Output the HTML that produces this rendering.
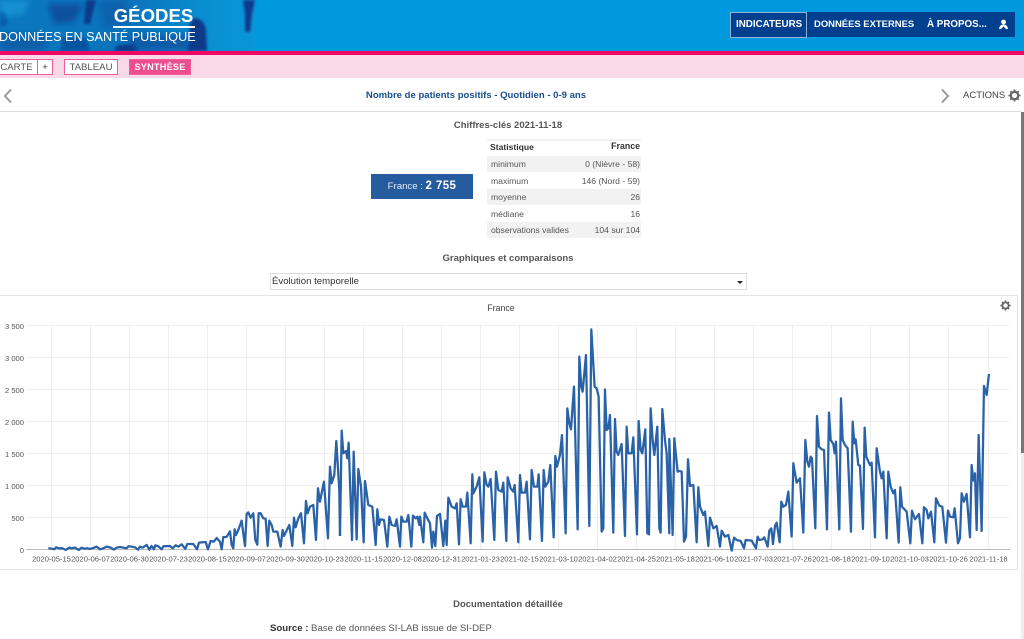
<!DOCTYPE html>
<html lang="fr"><head><meta charset="utf-8"><title>Géodes</title>
<style>
html,body{margin:0;padding:0;width:1024px;height:639px;overflow:hidden;background:#fff;font-family:"Liberation Sans",sans-serif;color:#444}
.a{position:absolute;white-space:nowrap}
.btn{box-sizing:border-box;background:#fff;border:1px solid #ee5e98;height:16px;line-height:15px;font-size:9.6px;color:#555;text-align:center}
.h{font-size:9.5px;font-weight:bold;color:#555;text-align:center}
.r{left:487px;width:154px;height:16.4px;line-height:16.4px;font-size:8.6px;color:#555}
.r span{position:absolute;right:1px}
.r b{font-weight:normal;margin-left:4px}
.g{background:#f2f2f2}
.nv{color:#fff;font-size:9.8px;font-weight:bold;top:12px;height:25px;line-height:25px}
</style></head><body>

<svg class="a" style="left:0;top:0" width="1024" height="51">
<defs>
<linearGradient id="bg" x1="0" x2="1"><stop offset="0" stop-color="#0a78c0"/><stop offset=".5" stop-color="#0a72ba"/><stop offset=".8" stop-color="#0a8ed2"/><stop offset="1" stop-color="#0a96da"/></linearGradient>
<filter id="bl" x="-20%" y="-20%" width="140%" height="140%"><feGaussianBlur stdDeviation="3"/></filter>
<filter id="b2" x="-30%" y="-30%" width="160%" height="160%"><feGaussianBlur stdDeviation="1.2"/></filter>
</defs>
<rect width="1024" height="51" fill="#0099dd"/>
<rect width="256" height="51" fill="url(#bg)"/>
<g filter="url(#bl)">
<path d="M0 0H30L24 14L0 18Z" fill="#1590d0"/>
<path d="M0 32L50 36L44 51H0Z" fill="#0a5fa8"/>
<path d="M48 4H84L74 22L54 24Z" fill="#0b4f9f"/>
<path d="M98 0H125L130 22L104 28Z" fill="#0a62ad"/>
<path d="M130 34H190V51H125Z" fill="#0a5ca8"/>
</g>
<g filter="url(#b2)" fill="#083a8a">
<path d="M86 0H96L90 24H84Z"/>
<path d="M193 18Q204 18 206 30L207 51H187Q191 36 189 26Z"/>
<path d="M243 0H255L252 14L250 32H245L245 14Z"/>
<path d="M62 38H86L90 51H60Z" opacity=".55"/>
<path d="M118 45H134L138 51H114Z"/>
<path d="M0 12H5L8 24L0 28Z" opacity=".4"/>
</g>
</svg>
<div class="a" style="left:103px;top:6px;width:101px;text-align:center;color:#fff;font-size:18.6px;font-weight:bold;line-height:20px">GÉODES</div>
<div class="a" style="left:113px;top:26px;width:82px;height:2px;background:#fff"></div>
<div class="a" style="left:-1px;top:29px;color:#fff;font-size:12.65px;line-height:16px">DONNÉES EN SANTÉ PUBLIQUE</div>

<div class="a" style="left:730px;top:12px;width:285px;height:25px;background:#00408f"></div>
<div class="a" style="left:730px;top:12px;width:75px;height:24px;border:1px solid #8fb2d6"></div>
<div class="a nv" style="left:736px">INDICATEURS</div>
<div class="a nv" style="left:814px;font-size:9.45px">DONNÉES EXTERNES</div>
<div class="a nv" style="left:927px">À PROPOS...</div>
<svg class="a" style="left:998px;top:19px" width="11" height="11" viewBox="0 0 11 11"><circle cx="5.5" cy="3" r="2.4" fill="#fff"/><path d="M1 10Q1.5 5.5 5.5 5.5T10 10H8L5.5 7.5L3 10Z" fill="#fff"/></svg>

<div class="a" style="left:0;top:51px;width:1024px;height:4px;background:#ee0a64"></div>
<div class="a" style="left:0;top:55px;width:1024px;height:23px;background:#f9d9e7"></div>
<div class="a btn" style="left:-6px;top:59px;width:44px;padding-left:1px">CARTE</div>
<div class="a btn" style="left:37px;top:59px;width:16px;color:#333">+</div>
<div class="a btn" style="left:64px;top:59px;width:54px">TABLEAU</div>
<div class="a btn" style="left:129px;top:59px;width:62px;background:#ee4d90;color:#fff;font-weight:bold;font-size:9.2px;letter-spacing:.2px">SYNTHÈSE</div>

<svg class="a" style="left:2px;top:88px" width="12" height="16"><path d="M9 1.5L3 8L9 14.5" fill="none" stroke="#9a9a9a" stroke-width="2"/></svg>
<div class="a" style="left:0;top:89px;width:952px;text-align:center;font-size:9.55px;font-weight:bold;color:#174f8f;line-height:13px">Nombre de patients positifs - Quotidien - 0-9 ans</div>
<svg class="a" style="left:939px;top:88px" width="12" height="16"><path d="M3 1.5L9 8L3 14.5" fill="none" stroke="#9a9a9a" stroke-width="2"/></svg>
<div class="a" style="left:963px;top:89px;font-size:9.5px;color:#444;line-height:13px">ACTIONS</div>
<svg class="a" style="left:1008px;top:89px" width="13" height="13" viewBox="0 0 13 13"><circle cx="6.5" cy="6.5" r="3.7" fill="none" stroke="#666" stroke-width="2.2"/><path d="M6.5 .5V2.5M6.5 10.5V12.5M.5 6.5H2.5M10.5 6.5H12.5M2.3 2.3L3.7 3.7M9.3 9.3L10.7 10.7M2.3 10.7L3.7 9.3M9.3 3.7L10.7 2.3" stroke="#666" stroke-width="1.8"/></svg>
<div class="a" style="left:0;top:111px;width:1021px;height:1px;background:#ddd"></div>

<div class="a" style="left:1021px;top:112px;width:3px;height:341px;background:#777"></div>
<div class="a" style="left:1021px;top:453px;width:3px;height:186px;background:#eee"></div>

<div class="a h" style="left:360px;top:120px;width:296px;line-height:12px">Chiffres-clés 2021-11-18</div>
<div class="a" style="left:371px;top:174px;width:102px;height:25px;background:#245c9f;color:#e3ebf4;text-align:center;line-height:25px;font-size:9.6px">France : <b style="font-size:11.5px;color:#fff;letter-spacing:.4px">2 755</b></div>

<div class="a" style="left:487px;top:139px;width:154px;height:2px;background:#f2f2f2"></div>
<div class="a r" style="top:139px;font-weight:bold;color:#333;height:17px;line-height:17px"><b style="font-weight:bold;margin-left:3px">Statistique</b><span style="top:-1px;font-size:8.8px">France</span></div>
<div class="a r g" style="top:156px"><b>minimum</b><span>0 (Nièvre - 58)</span></div>
<div class="a r" style="top:172.5px"><b>maximum</b><span>146 (Nord - 59)</span></div>
<div class="a r g" style="top:189px"><b>moyenne</b><span>26</span></div>
<div class="a r" style="top:205.5px"><b>médiane</b><span>16</span></div>
<div class="a r g" style="top:222px"><b>observations valides</b><span>104 sur 104</span></div>

<div class="a h" style="left:360px;top:253px;width:296px;line-height:12px">Graphiques et comparaisons</div>
<div class="a" style="left:270px;top:273px;height:15px;border:1px solid #ddd;font-size:9.6px;line-height:15px;color:#333;padding-left:1px;width:474px">Évolution temporelle</div>
<div class="a" style="left:737px;top:281px;width:0;height:0;border:3px solid transparent;border-top:3px solid #222"></div>

<div class="a" style="left:-2px;top:295px;width:1018px;height:273px;border:1px solid #e4e4e4"></div>
<div class="a" style="left:340px;top:302px;width:322px;text-align:center;font-size:8.8px;color:#444;line-height:12px">France</div>
<svg class="a" style="left:1000px;top:300px" width="11" height="11" viewBox="0 0 13 13"><circle cx="6.5" cy="6.5" r="3.7" fill="none" stroke="#666" stroke-width="2.2"/><path d="M6.5 .5V2.5M6.5 10.5V12.5M.5 6.5H2.5M10.5 6.5H12.5M2.3 2.3L3.7 3.7M9.3 9.3L10.7 10.7M2.3 10.7L3.7 9.3M9.3 3.7L10.7 2.3" stroke="#666" stroke-width="1.8"/></svg>

<svg class="a" style="left:0;top:0" width="1024" height="639" font-family="'Liberation Sans',sans-serif" font-size="7.6" fill="#555">
<g stroke="#efefef" stroke-width="1">
<path d="M26 325.5H1010M26 357.5H1010M26 389.5H1010M26 421.5H1010M26 453.5H1010M26 485.5H1010M26 517.5H1010"/>
<path d="M51.5 326V549M90.5 326V549M129.5 326V549M168.5 326V549M207.5 326V549M246.5 326V549M285.5 326V549M324.5 326V549M363.5 326V549M402.5 326V549M441.5 326V549M480.5 326V549M519.5 326V549M558.5 326V549M597.5 326V549M636.5 326V549M675.5 326V549M714.5 326V549M753.5 326V549M792.5 326V549M831.5 326V549M870.5 326V549M909.5 326V549M948.5 326V549M988.5 326V549"/>
</g>
<path d="M26 549.5H1010" stroke="#bbb" stroke-width="1"/>
<g text-anchor="end"><text x="24" y="329">3 500</text><text x="24" y="361">3 000</text><text x="24" y="393">2 500</text><text x="24" y="425">2 000</text><text x="24" y="457">1 500</text><text x="24" y="489">1 000</text><text x="24" y="521">500</text><text x="24" y="553">0</text></g>
<g text-anchor="middle" font-size="7.6">
<text x="51.5" y="561.5">2020-05-15</text><text x="90.5" y="561.5">2020-06-07</text><text x="129.5" y="561.5">2020-06-30</text><text x="168.5" y="561.5">2020-07-23</text><text x="207.5" y="561.5">2020-08-15</text><text x="246.5" y="561.5">2020-09-07</text><text x="285.5" y="561.5">2020-09-30</text><text x="324.5" y="561.5">2020-10-23</text><text x="363.5" y="561.5">2020-11-15</text><text x="402.5" y="561.5">2020-12-08</text><text x="441.5" y="561.5">2020-12-31</text><text x="480.5" y="561.5">2021-01-23</text><text x="519.5" y="561.5">2021-02-15</text><text x="558.5" y="561.5">2021-03-10</text><text x="597.5" y="561.5">2021-04-02</text><text x="636.5" y="561.5">2021-04-25</text><text x="675.5" y="561.5">2021-05-18</text><text x="714.5" y="561.5">2021-06-10</text><text x="753.5" y="561.5">2021-07-03</text><text x="792.5" y="561.5">2021-07-26</text><text x="831.5" y="561.5">2021-08-18</text><text x="870.5" y="561.5">2021-09-10</text><text x="909.5" y="561.5">2021-10-03</text><text x="948.5" y="561.5">2021-10-26</text><text x="988.5" y="561.5">2021-11-18</text>
</g>
<g fill="none" stroke="#2a62a8" stroke-width="6.8" stroke-linejoin="round">
<polyline transform="translate(0,290) scale(.3333)" points="145,775 155,776 163,778 168,772 178,775 188,775 197,780 208,773 215,775 225,773 236,780 245,773 252,776 262,775 270,777 280,774 290,770 300,778 310,775 320,770 332,773 342,779 350,773 360,771 370,773 380,775 385,769 395,770 405,772 414,779 420,770 428,773 440,765 448,779 455,768 462,778 466,766 475,769 485,778 490,769 510,768 518,775 527,766 535,770 545,763 556,777 562,762 580,762 591,778 597,758 617,756 624,778 632,753 642,755 650,744 660,755 665,778 670,741 680,741 690,724 695,765 700,775 704,718 708,735 715,720 725,692 735,768 740,672 745,667 752,683 760,670 766,750 772,764 776,670 782,670 790,685 797,686 803,768 808,692 815,705 820,725 832,725 842,770 848,720 852,738 868,705 877,768 882,683 887,712 895,685 903,670 912,760 918,633 923,670 930,650 940,645 948,750 954,595 960,635 972,575 984,745 990,530 995,580 1003,555 1009,453 1018,600 1020,738"/>
<polyline transform="translate(340,290) scale(.3333)" points="0,738 5,422 10,490 18,483 22,505 26,458 36,750 41,485 50,748 55,537 63,590 71,757 75,573 85,645 97,650 107,765 112,658 117,705 122,688 132,690 142,770 148,680 155,705 165,708 170,688 180,770 184,680 190,695 200,695 205,675 214,770 219,677 227,685 232,680 238,705 240,680 250,757 254,668 262,685 270,700 276,773 280,725 286,768 291,678 300,672 310,768 316,692 320,765 325,623 335,650 345,655 350,640 357,763 362,628 368,650 378,650 382,608 392,760 397,553 400,610 410,590 418,562 428,755 433,547 440,585 445,590 452,567 463,750 468,545 475,600 485,605 490,578 499,753 503,562 512,595 520,605 524,585 535,757 540,555 545,608 555,608 560,575 570,748 575,540 582,590 592,590 596,553 606,753 611,540 616,590 625,575 631,525 641,742 646,498 651,530 660,495 666,435 677,730 682,355 688,400 693,418 702,290 713,718 718,200 724,290 728,305 738,195 748,708 754,118 764,290 770,295 776,320 785,725 790,715 795,298 800,420 805,415 810,375 820,728 825,387 830,485 835,495 845,462 855,738 860,410 865,490 875,490 880,442 891,733 896,393 902,480 907,490 916,418 922,730 927,733 932,355 938,450 943,495 952,410 958,715 962,728 967,357 975,450 980,490 988,730 988,447 998,735 1003,445 1013,545 1020,542"/>
<polyline transform="translate(680,290) scale(.3333)" points="0,543 5,545 12,755 18,740 24,508 30,588 40,585 50,757 55,592 60,650 70,675 75,665 85,768 90,683 100,715 110,708 120,770 125,722 135,740 145,735 155,782 162,743 170,750 182,753 192,775 197,750 215,752 228,775 233,740 238,750 248,748 253,742 263,770 268,722 274,715 279,762 285,708 290,698 299,757 304,635 310,650 318,645 325,605 335,740 340,520 350,578 360,565 370,728 376,450 382,515 387,530 392,500 396,505 406,715 411,378 417,470 425,478 432,480 441,718 447,368 452,450 460,462 464,490 468,455 478,718 483,325 488,450 495,465 503,475 513,725 518,395 523,460 527,448 535,525 540,527 549,717 554,413 559,500 570,525 575,518 585,742 590,475 600,545 605,565 610,545 620,745 625,545 632,590 640,610 645,600 656,758 661,592 666,650 680,665 691,760 696,662 705,688 717,672 727,760 732,652 740,660 745,685 753,665 763,757 768,625 778,647 787,650 798,758 804,662 810,680 820,682 824,655 834,760 840,745 845,610 852,635 860,612 870,742 875,525 880,572 885,550 890,720 896,435 905,723 912,288 920,315 927,252"/>
</g>
</svg>

<div class="a h" style="left:360px;top:599px;width:296px;line-height:12px">Documentation détaillée</div>
<div class="a" style="left:270px;top:623px;font-size:9.6px;line-height:12px;color:#555"><b style="color:#333">Source :</b> Base de données SI-LAB issue de SI-DEP</div>

</body></html>
